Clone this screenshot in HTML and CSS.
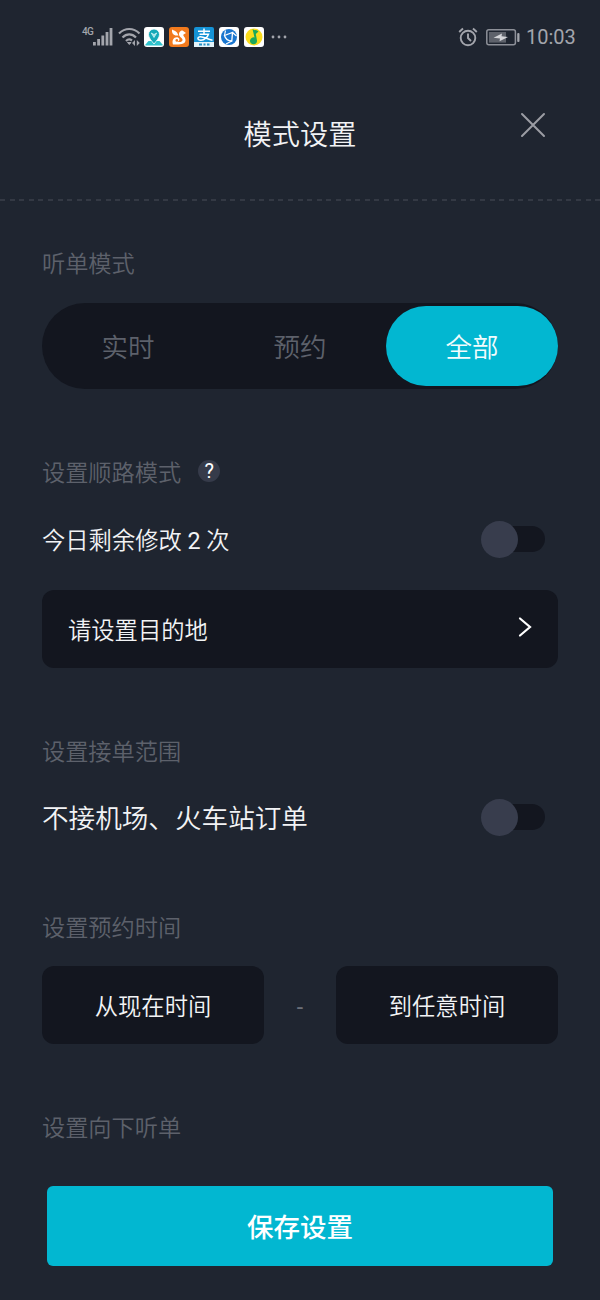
FILE: index.html
```html
<!DOCTYPE html>
<html lang="zh-CN">
<head>
    <meta charset="UTF-8">
    <meta name="viewport" content="width=device-width, initial-scale=1.0">
    <title>模式设置</title>
    <link rel="stylesheet" href="styles.css">
</head>
<body>

    <div class="status-bar">
        <span class="network">4G</span>
        <svg class="signal" width="20" height="20" viewBox="0 0 20 20" fill="#a3a5ac">
            <rect x="0" y="15" width="2.8" height="3.500"/>
            <rect x="4.2" y="12" width="2.8" height="6.500"/>
            <rect x="8.4" y="8.5" width="2.8" height="10"/>
            <rect x="12.6" y="5" width="2.8" height="13.500"/>
            <rect x="16.6" y="1" width="2.8" height="17.500"/>
        </svg>
        <svg class="wifi" width="23" height="20" viewBox="0 0 23 20" fill="none" stroke="#a3a5ac" stroke-width="2.2">
            <path d="M1 6.500C7 .5 15.500 .5 21.500 6.500M4.500 10.500C8.500 6.300 14 6.300 18 10.500M8 14C10 12 12 12 14 13.500"/>
            <path d="M9.500 15.500L11.300 17.500L13 15.500Z" fill="#a3a5ac" stroke-width="1"/>
            <path d="M17 13L14 16L17 19ZM18.800 13L21.800 16L18.800 19Z" fill="#a3a5ac" stroke="none"/>
        </svg>
        <div class="apps">
            <svg width="20" height="20" viewBox="0 0 20 20">
                <rect width="20" height="20" rx="3" fill="#fff"/>
                <path d="M1.500 17.500L4.500 14H15.500L18.500 17.500V18.500H1.500Z" fill="#2fc3cd"/>
                <path d="M10 17C7.500 13.500 4.500 11 4.500 7.500A5.500 5.500 0 0 1 15.500 7.500C15.500 11 12.500 13.500 10 17Z" fill="#16a9b8" stroke="#fff" stroke-width=".8"/>
                <path d="M7.300 6L10 10.500L12.700 6L10 7.500Z" fill="#8ee4e6" stroke="#fff" stroke-width=".6"/>
            </svg>
            <svg width="20" height="20" viewBox="0 0 20 20">
                <rect width="20" height="20" rx="3" fill="#f27a1d"/>
                <path d="M3 2.500C5 4 6.500 3.500 8 5.500L9.500 8.500L6.500 8.500C4 7.500 2.500 6 3 2.500Z" fill="#fff"/>
                <path d="M10.500 9C9 6 11 3.500 13.500 3.500L17 6L14.500 7.500C13.500 9 16.500 10 16.500 13C16.500 17 12 18 4 17.500C2.500 13.500 5 9.500 9 10.500C11.500 11.500 10.500 15 8 14.500C11 16 14 14.500 13.500 12.500C13 11 11.500 10.500 10.500 9Z" fill="#fff"/>
                <circle cx="7.800" cy="13.400" r="1.300" fill="#f27a1d"/>
            </svg>
            <svg width="20" height="20" viewBox="0 0 20 20">
                <rect width="20" height="20" rx="2" fill="#1593d6"/>
                <path d="M4 4.300H16M10 1.500V7M5.500 7.200H14.500C13.500 10 10.500 13.300 7 13.300C3 13.300 3 9.700 6.500 9.700C10 9.700 13 12 18.500 13.300" fill="none" stroke="#fff" stroke-width="1.500"/>
                <rect y="15" width="20" height="5" fill="#e4f4fb"/>
                <path d="M5 17.500H8M9.500 17.500H11.500M13 17.500H15.500" stroke="#258fc4" stroke-width="2"/>
            </svg>
            <svg width="20" height="20" viewBox="0 0 20 20">
                <rect width="20" height="20" rx="3" fill="#fff"/>
                <circle cx="10" cy="10" r="8" fill="#1976cf"/>
                <path d="M5.500 8.500L13.500 5.500L12.800 14C9 14 6.500 12 5.500 8.500Z" fill="none" stroke="#fff" stroke-width="1.300"/>
                <path d="M5.500 8.500L6.500 3.500M13.500 5.500L17.500 9M12.800 14L7 17" stroke="#fff" stroke-width="1.200"/>
            </svg>
            <svg width="20" height="20" viewBox="0 0 20 20">
                <rect width="20" height="20" rx="3" fill="#fff"/>
                <circle cx="10" cy="10" r="8.500" fill="#fbdc1c"/>
                <path d="M8.500 2C10 3.500 13 3 14.500 4.500L11.800 7L13 13.500A3.500 3.500 0 1 1 10.500 10.500L8.500 2Z" fill="#1ba85b"/>
            </svg>
        </div>
        <svg class="dots" width="16" height="4" viewBox="0 0 16 4" fill="#a3a5ac">
            <circle cx="2" cy="2" r="1.400"/>
            <circle cx="8" cy="2" r="1.400"/>
            <circle cx="14" cy="2" r="1.400"/>
        </svg>
        <svg class="alarm" width="20" height="20" viewBox="0 0 20 20" fill="none" stroke="#a3a5ac" stroke-width="1.900">
            <circle cx="10" cy="11" r="7.300"/>
            <path d="M1.200 5L5 1.500M18.800 5L15 1.500M10 6.500V11L13 14"/>
        </svg>
        <svg class="battery" width="34" height="17" viewBox="0 0 34 17">
            <rect x=".8" y=".8" width="28.600" height="15" rx="2" fill="none" stroke="#8d9098" stroke-width="1.500"/>
            <rect x="3" y="3" width="17" height="10.600" fill="#5e626b"/>
            <rect x="31.200" y="4" width="2.300" height="9" rx="1" fill="#a3a5ac"/>
            <path d="M7.500 8.800L16 4.500L15.500 7.200L22 8L13.500 12.300L14 9.500Z" fill="#d3d4d8"/>
        </svg>
        <span class="clock">10:03</span>
    </div>

    <header class="header">
        <h1>模式设置</h1>
        <button class="close" aria-label="关闭">
            <svg width="26" height="26" viewBox="0 0 26 26" fill="none" stroke="#9b9da4" stroke-width="2" stroke-linecap="round">
                <path d="M2 2L24 24M24 2L2 24"/>
            </svg>
        </button>
    </header>

    <main class="content">
        <section class="section mode">
            <h2>听单模式</h2>
            <div class="tabs">
                <button class="tab">实时</button>
                <button class="tab">预约</button>
                <button class="tab active">全部</button>
            </div>
        </section>

        <section class="section route">
            <h2>设置顺路模式 <span class="help">?</span></h2>
            <div class="row">
                <span>今日剩余修改 <span class="count">2</span> 次</span>
                <span class="switch"></span>
            </div>
            <div class="box destination">
                <span>请设置目的地</span>
                <svg width="14" height="22" viewBox="0 0 14 22" fill="none" stroke="#fff" stroke-width="2.200" stroke-linecap="round">
                    <path d="M2 2.500L12 11L2 19.500"/>
                </svg>
            </div>
        </section>

        <section class="section range">
            <h2>设置接单范围</h2>
            <div class="row large">
                <span>不接机场、火车站订单</span>
                <span class="switch"></span>
            </div>
        </section>

        <section class="section time">
            <h2>设置预约时间</h2>
            <div class="times">
                <div class="box">从现在时间</div>
                <span class="dash">-</span>
                <div class="box">到任意时间</div>
            </div>
        </section>

        <section class="section down">
            <h2>设置向下听单</h2>
        </section>
    </main>

    <button class="save">保存设置</button>

</body>
</html>
```
FILE: styles.css
```css
* {
    box-sizing: border-box;
}

body {
    margin: 0;
    height: 1300px;
    overflow: hidden;
    display: flex;
    flex-direction: column;
    background: #1f2530;
    color: #f2f3f5;
    font-family: Roboto, 'Noto Sans CJK SC', sans-serif;
    font-weight: 350;
}

h1, h2 {
    margin: 0;
    font-weight: 350;
}

button {
    padding: 0;
    border: none;
    background: none;
    color: inherit;
    font: inherit;
    cursor: pointer;
}

svg {
    display: block;
    flex: none;
}

.status-bar {
    display: flex;
    align-items: center;
    height: 74px;
    padding: 0 25px 0 82px;
    color: #a3a5ac;
}

.network {
    width: 11px;
    margin-top: -10px;
    font-size: 10px;
    line-height: 10px;
    font-weight: 500;
    letter-spacing: -0.8px;
}

.wifi {
    margin-left: 5px;
}

.apps {
    display: flex;
    gap: 5px;
    margin-left: 3px;
}

.dots {
    margin-left: 7px;
}

.alarm {
    margin-left: auto;
}

.battery {
    margin-left: 8px;
}

.clock {
    width: 49px;
    margin-left: 6px;
    font-size: 20px;
    font-weight: 400;
}

.header {
    display: grid;
    grid-template-columns: 1fr auto 1fr;
    align-items: center;
    height: 127px;
    padding: 0 54px;
    background: repeating-linear-gradient(90deg, #343944 0 5px, transparent 5px 9.6px) bottom / 100% 2px no-repeat;
}

.header h1 {
    grid-column: 2;
    margin-top: -4px;
    font-size: 28.2px;
    line-height: 40px;
}

.close {
    justify-self: end;
    margin-top: -25px;
}

.content {
    padding: 0 42px;
}

.section h2 {
    display: flex;
    align-items: center;
    height: 34px;
    color: #5d616b;
    font-size: 23.2px;
    line-height: 34px;
}

.mode {
    padding-top: 46px;
}

.route {
    padding-top: 67px;
}

.range {
    padding-top: 67px;
}

.time {
    padding-top: 74px;
}

.down {
    padding-top: 67px;
}

.tabs {
    display: grid;
    grid-template-columns: repeat(3, 1fr);
    height: 86px;
    margin-top: 22px;
    padding: 3px 0;
    border-radius: 43px;
    background: #13161f;
}

.tab {
    padding-bottom: 2px;
    border-radius: 40px;
    color: #5d616b;
    font-size: 26.5px;
}

.tab.active {
    background: #02b7d1;
    color: #f2fcfd;
}

.help {
    display: flex;
    align-items: center;
    justify-content: center;
    width: 22px;
    height: 22px;
    margin: -4px 0 0 17px;
    border-radius: 50%;
    background: #363b4a;
    color: #fff;
    font-size: 20px;
    line-height: 22px;
    font-weight: 400;
}

.row {
    display: flex;
    align-items: center;
    justify-content: space-between;
    height: 40px;
    margin-top: 29px;
    padding-right: 13px;
    font-size: 23.3px;
}

.row.large {
    margin-top: 28px;
    font-size: 26.6px;
}

.row.large > span:first-child {
    padding-bottom: 2px;
}

.count {
    font-weight: 400;
}

.switch {
    display: flex;
    align-items: center;
    width: 61px;
    height: 26px;
    border-radius: 13px;
    background: #13161f;
}

.switch::before {
    content: "";
    flex: none;
    width: 37px;
    height: 37px;
    margin-left: -3px;
    border-radius: 50%;
    background: #383d4d;
}

.box {
    display: flex;
    align-items: center;
    justify-content: center;
    height: 78px;
    border-radius: 12px;
    background: #13161f;
    font-size: 23.3px;
}

.destination {
    justify-content: space-between;
    margin-top: 31px;
    padding: 0 26px;
}

.destination svg {
    margin-top: -5px;
}

.times {
    display: grid;
    grid-template-columns: 1fr 72px 1fr;
    align-items: center;
    margin-top: 21px;
}

.dash {
    padding-top: 4px;
    color: #6b6f79;
    font-size: 23px;
    font-weight: 400;
    text-align: center;
}

.save {
    height: 80px;
    margin: auto 47px 34px;
    padding-bottom: 2px;
    border-radius: 6px;
    background: #02b7d1;
    color: #fff;
    font-size: 26.5px;
    font-weight: 500;
}
```
